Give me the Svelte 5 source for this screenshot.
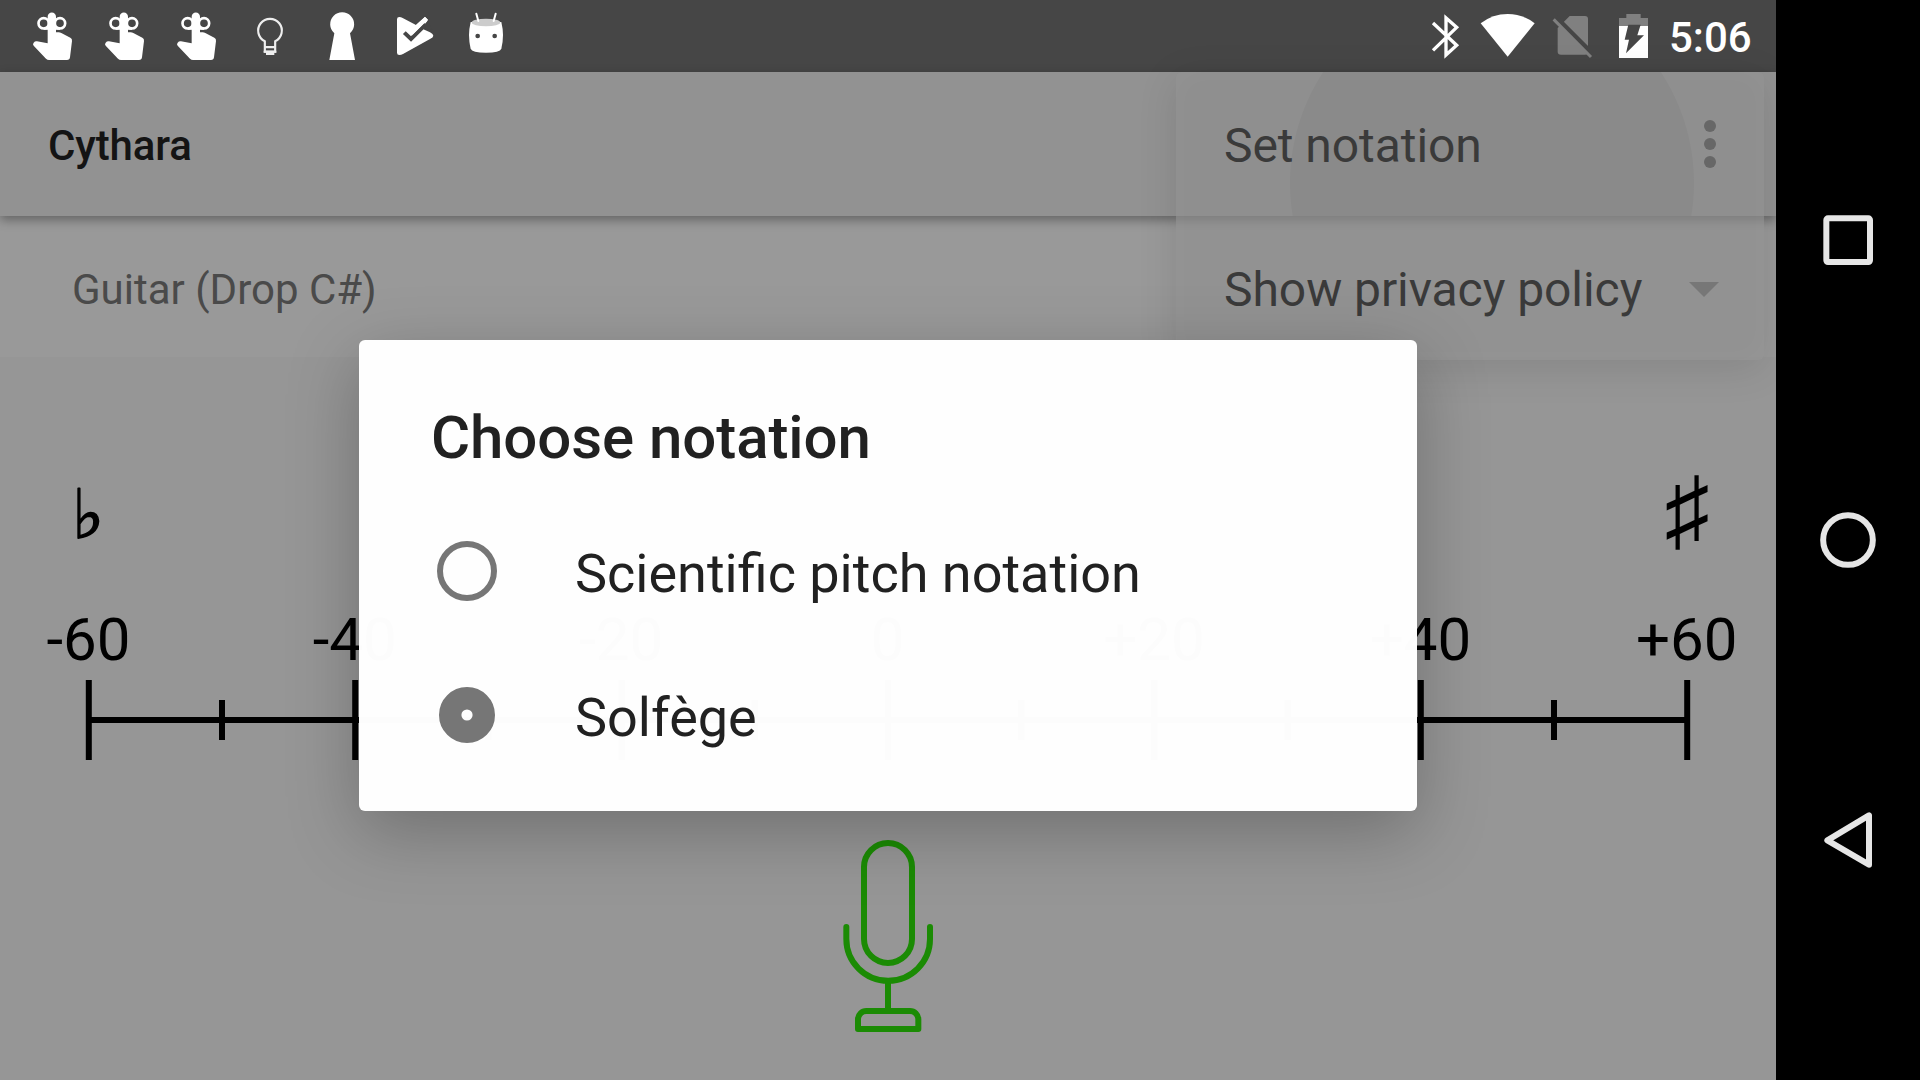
<script>
  const labels = ['-60', '-40', '-20', '0', '+20', '+40', '+60'];
  const step = 266.4;
  const start = 88.8;
  const ticks = Array.from({ length: 13 }, (_, i) => ({ x: start + (i * step) / 2, major: i % 2 === 0 }));
  const options = [
    { name: 'Scientific pitch notation', checked: false },
    { name: 'Solfège', checked: true }
  ];
  const menu = ['Set notation', 'Show privacy policy'];
</script>

<div class="screen">
  <div class="app">
    <header class="status">
      <div class="notifications">
        {#each [0, 1, 2] as n (n)}
          <svg class="cell" viewBox="0 0 216 216">
            <g fill="none" stroke="#fff" stroke-width="8">
              <circle cx="77" cy="70" r="15.500" />
              <circle cx="126" cy="70" r="15.500" />
              <path d="M77 85.500H126" />
            </g>
            <path fill="#fff" d="M89 50a12.500 12.500 0 0 1 25 0V97h8q4 0 8 2l27 14q6 3 5 10l-6 49q-1 8-9 8H93q-5 0-9-4L47 137q-4-5 0-9 4-5 10-4l32 6z" />
          </svg>
        {/each}
        <svg class="cell" viewBox="0 0 216 216">
          <path d="M92.500 155V124a35.500 35.500 0 1 1 31 0V155zM92 141.500h32" fill="none" stroke="#eee" stroke-width="6.500" />
          <path d="M89 152h38v6h-6v7H96v-7h-7z" fill="#eee" />
        </svg>
        <svg class="cell" viewBox="0 0 216 216">
          <path d="M85 100A36 36 0 1 1 132 100L147 180H70z" fill="#fff" />
        </svg>
        <svg class="cell" viewBox="0 0 216 216">
          <path d="M57 58q0-7 7-7 5 0 10 3l40 21 27-25 9 9-14 29 20 9q10 5 10 10t-10 10L75 162q-5 3-11 3-7 0-7-7z" fill="#fff" />
          <path d="M79 98l20 19 44-44" fill="none" stroke="#464646" stroke-width="12" />
          <path d="M141 71l8-8 14 24-18 3z" fill="#464646" />
          <path d="M114 75l27-24 8 8-48 48z" fill="#fff" />
        </svg>
        <svg class="cell" viewBox="0 0 216 216">
          <path d="M62 66H154q10 40 0 80-4 12-46 12t-46-12q-10-40 0-80z" fill="#fff" />
          <ellipse cx="108" cy="67.500" rx="43" ry="11.500" fill="#ccc" />
          <path d="M79 41l6 22M137 41l-6 22" stroke="#fff" stroke-width="6" stroke-linecap="round" />
          <circle cx="83" cy="108" r="7" fill="#464646" />
          <circle cx="134" cy="108" r="7" fill="#464646" />
        </svg>
      </div>
      <div class="system">
        <svg width="38" height="72" viewBox="84 0 114 216">
          <path d="M99 69L170 136 138 165V54L170 82 99 151" fill="none" stroke="#fff" stroke-width="10" />
        </svg>
        <svg width="78" height="72" viewBox="198 0 234 216">
          <path d="M242 70Q278 42 323 42T404 70L323 170z" fill="#fff" />
        </svg>
        <svg width="60" height="72" viewBox="432 0 180 216">
          <path d="M509 48h46q9 0 9 9v98q0 9-9 9h-72q-10 0-10-9V84z" fill="#808080" />
          <path d="M467 51L584 168" stroke="#464646" stroke-width="14" />
          <path d="M461 58L573 171" stroke="#808080" stroke-width="9" />
        </svg>
        <svg width="56" height="72" viewBox="612 0 168 216">
          <path d="M657 54h22V42h43v12h22v26H657z" fill="#808080" />
          <path d="M657 78h87v96H657z" fill="#fff" />
          <path d="M685 74h37l-10 32h20l-54 54 9-41h-13z" fill="#464646" />
        </svg>
        <span class="clock">5:06</span>
      </div>
    </header>

    <div class="toolbar">
      <h1>Cythara</h1>
      <svg class="more" viewBox="0 0 12 48" fill="#2d2d2d">
        <circle cx="6" cy="6" r="6" /><circle cx="6" cy="24" r="6" /><circle cx="6" cy="42" r="6" />
      </svg>
    </div>

    <div class="spinner">
      <span>Guitar (Drop C#)</span>
      <svg class="caret" viewBox="0 0 30 15"><path d="M0 0h30L15 15z" fill="#555" /></svg>
    </div>

    <main>
      <svg class="scale" viewBox="0 357 1776 479">
        <text class="flat" x="88.300" y="538">♭</text>
        <text class="sharp" x="1687" y="541">♯</text>
        {#each labels as label, i (label)}
          <text class="label" x={start - 0.4 + i * step} y="660">{label}</text>
        {/each}
        <path d="M88.800 720H1687.200" stroke="#000" stroke-width="6" />
        {#each ticks as t (t.x)}
          <path d="M{t.x} {t.major ? 680 : 700}V{t.major ? 760 : 740}" stroke="#000" stroke-width="6" />
        {/each}
      </svg>
      <svg class="mic" viewBox="120 168 288 600" fill="none" stroke="#1b8b04" stroke-width="18" stroke-linecap="round" stroke-linejoin="round">
        <rect x="192" y="189" width="144" height="360" rx="72" />
        <path d="M139 441V477a125.500 125.500 0 0 0 251 0V441M264 603V693M174 747V717a25 25 0 0 1 25-24H330a25 25 0 0 1 25 24V747z" />
      </svg>
    </main>

    <div class="popup">
      {#each menu as item, i (item)}
        <div class="menu-item" class:pressed={i === 0}><span>{item}</span></div>
      {/each}
    </div>

    <section class="dialog">
      <h2>Choose notation</h2>
      {#each options as o (o.name)}
        <div class="option">
          <svg viewBox="0 0 60 60">
            {#if o.checked}
              <circle cx="30" cy="30" r="16.800" fill="none" stroke="#767676" stroke-width="22.400" />
            {:else}
              <circle cx="30" cy="30" r="27" fill="none" stroke="#767676" stroke-width="6" />
            {/if}
          </svg>
          <span>{o.name}</span>
        </div>
      {/each}
    </section>
  </div>

  <nav>
    <svg viewBox="0 0 432 432"><rect x="151" y="151" width="131" height="131" rx="5" /></svg>
    <svg viewBox="0 0 432 432"><circle cx="216" cy="216" r="74.500" /></svg>
    <svg viewBox="0 0 432 432"><path d="M154 217L279 142V290z" /></svg>
  </nav>
</div>

<style>
  :global(body) { margin: 0; background: #000; }
  .screen { display: flex; width: 1920px; height: 1080px; overflow: hidden; font-family: Roboto, sans-serif; background: #000; }
  .app { position: relative; display: flex; flex-direction: column; width: 1776px; height: 1080px; overflow: hidden; background: #969696; }
  svg { display: block; flex: none; }

  .status { display: flex; justify-content: space-between; height: 72px; flex: none; background: #464646; }
  .notifications { display: flex; padding-left: 18px; }
  .cell { width: 72px; height: 72px; }
  .system { display: flex; align-items: center; width: 348px; }
  .clock { margin-left: 9px; font-size: 42px; font-weight: 500; color: #fff; line-height: 72px; padding-top: 4px; }

  .toolbar { position: relative; display: flex; align-items: center; justify-content: space-between; height: 144px; flex: none; box-sizing: border-box; padding: 0 60px 0 48px; background: #929292; box-shadow: 0 4px 10px rgba(0, 0, 0, 0.35); }
  h1 { margin: 0; padding-top: 2px; font-size: 42px; font-weight: 500; letter-spacing: -0.15px; color: #141414; }
  .more { width: 12px; height: 48px; }

  .spinner { display: flex; align-items: center; justify-content: space-between; height: 141px; flex: none; box-sizing: border-box; padding: 5px 57px 0 72px; background: #999; font-size: 42px; color: #4a4a4a; }
  .caret { width: 30px; height: 15px; }

  main { display: flex; flex-direction: column; align-items: center; }
  .scale { width: 1776px; height: 479px; }
  .scale text { fill: #000; }
  .label { font-size: 60px; text-anchor: middle; }
  .flat, .sharp { font-family: 'Noto Sans', sans-serif; text-anchor: middle; }
  .flat { font-size: 68px; stroke: #000; stroke-width: 1.4px; }
  .sharp { font-size: 90.5px; }
  .mic { width: 96px; height: 200px; }

  .popup { position: absolute; top: 72px; left: 1176px; width: 588px; height: 288px; border-radius: 6px; overflow: hidden; background: rgba(141, 141, 141, 0.6); box-shadow: 0 8px 40px rgba(0, 0, 0, 0.11), inset 0 0 30px rgba(255, 255, 255, 0.04); }
  .menu-item { display: flex; align-items: center; height: 144px; padding-left: 48px; font-size: 48px; letter-spacing: -0.06px; color: #3a3a3a; }
  .menu-item span { padding-top: 3px; }
  .pressed { background: radial-gradient(circle at 316px 111px, rgba(0, 0, 0, 0.035) 201.500px, transparent 202.500px); }

  .dialog { position: absolute; top: 340px; left: 359px; width: 1058px; height: 471px; box-sizing: border-box; padding: 60px 0 0 72px; border-radius: 6px; background: rgba(255, 255, 255, 0.988); box-shadow: 0 20px 70px rgba(0, 0, 0, 0.26); color: #212121; }
  h2 { margin: 0 0 23px; font-size: 60px; font-weight: 500; line-height: 76px; letter-spacing: -0.08px; }
  .option { display: flex; align-items: center; gap: 78px; height: 144px; padding-left: 6px; font-size: 54px; }
  .option svg { width: 60px; height: 60px; }
  .option span { padding-top: 4px; }

  nav { display: flex; flex-direction: column; align-items: center; justify-content: space-between; width: 144px; height: 744px; padding: 168px 0; }
  nav svg { width: 144px; height: 144px; fill: none; stroke: #e6e6e6; stroke-width: 18; stroke-linejoin: round; }
</style>
